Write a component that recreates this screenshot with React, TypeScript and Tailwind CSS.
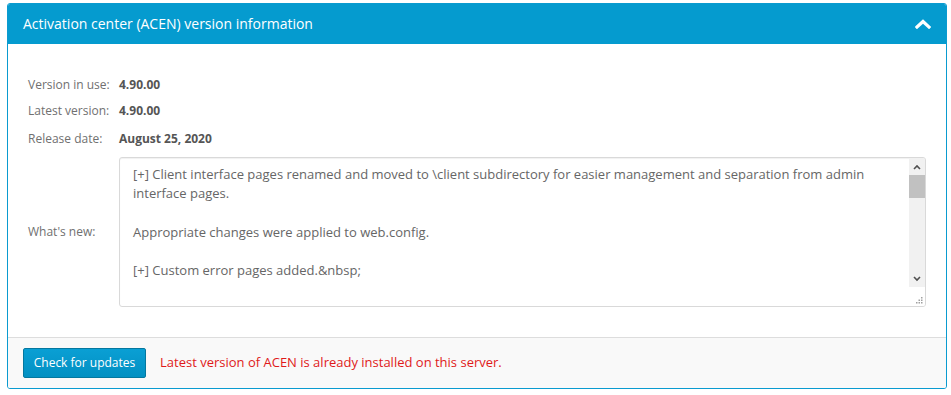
import React from "react";

export default function App() {
  const font = { fontFamily: '"Open Sans", "Liberation Sans", sans-serif' };
  return (
    <div className="w-[951px] h-[395px] bg-white pt-[3px] pl-[7px]" style={font}>
      <div className="w-[940px] h-[386px] border border-[#0a9bd0] rounded-[3px] flex flex-col overflow-hidden">
        {/* header */}
        <div className="h-[41px] -mt-px -mx-px bg-[#059bcf] flex items-center justify-between pl-[16px] pr-[16px] rounded-t-[3px]">
          <span className="text-white text-[14px] leading-none">Activation center (ACEN) version information</span>
          <svg width="16" height="10" viewBox="0 0 16 10">
            <polyline points="2,8 8,2.5 14,8" fill="none" stroke="white" strokeWidth="3.2" strokeLinecap="square" strokeLinejoin="miter" />
          </svg>
        </div>
        {/* body */}
        <div className="flex-1 bg-white pt-[28px] pl-[20px] pr-[20px] text-[12px]">
          <div className="flex items-center h-[26px]">
            <span className="w-[91px] text-[#707070]">Version in use:</span>
            <span className="font-bold text-[#555]">4.90.00</span>
          </div>
          <div className="flex items-center h-[26px]">
            <span className="w-[91px] text-[#707070]">Latest version:</span>
            <span className="font-bold text-[#555]">4.90.00</span>
          </div>
          <div className="flex items-center h-[26px] mt-[2px]">
            <span className="w-[91px] text-[#707070]">Release date:</span>
            <span className="font-bold text-[#555]">August 25, 2020</span>
          </div>
          <div className="flex items-center mt-[5px]">
            <span className="w-[91px] text-[#707070]">What's new:</span>
            <div className="w-[807px] h-[150px] border border-[#d9d9d9] rounded-[3px] flex overflow-hidden shadow-[inset_0_1px_1px_rgba(0,0,0,0.06)]">
              <div className="flex-1 pl-[13px] pt-[7px] pr-[10px] text-[13px] leading-[19.2px] text-[#666]">
                <p>[+] Client interface pages renamed and moved to \client subdirectory for easier management and separation from admin interface pages.</p>
                <p>&nbsp;</p>
                <p>Appropriate changes were applied to web.config.</p>
                <p>&nbsp;</p>
                <p>[+] Custom error pages added.&amp;nbsp;</p>
              </div>
              <div className="w-[16px] flex flex-col">
                <div className="flex-1 bg-[#f1f1f1] flex flex-col">
                  <div className="h-[17px] flex items-center justify-center">
                    <svg width="8" height="6" viewBox="0 0 8 6"><polyline points="1,5 4,2 7,5" fill="none" stroke="#505050" strokeWidth="1.6" /></svg>
                  </div>
                  <div className="h-[23px] bg-[#c1c1c1]" />
                  <div className="flex-1" />
                  <div className="h-[17px] flex items-center justify-center">
                    <svg width="8" height="6" viewBox="0 0 8 6"><polyline points="1,1 4,4 7,1" fill="none" stroke="#505050" strokeWidth="1.6" /></svg>
                  </div>
                </div>
                <div className="h-[19px] bg-white flex items-end justify-end pr-[2px] pb-[2px]">
                  <svg width="7" height="7" viewBox="0 0 7 7" fill="#a0a0a0">
                    <rect x="5" y="0" width="1.5" height="1.5" />
                    <rect x="2.5" y="2.5" width="1.5" height="1.5" />
                    <rect x="5" y="2.5" width="1.5" height="1.5" />
                    <rect x="0" y="5" width="1.5" height="1.5" />
                    <rect x="2.5" y="5" width="1.5" height="1.5" />
                    <rect x="5" y="5" width="1.5" height="1.5" />
                  </svg>
                </div>
              </div>
            </div>
          </div>
        </div>
        {/* footer */}
        <div className="h-[51px] border-t border-[#dddddd] bg-[#f9f9f9] flex items-center pl-[15px] gap-[14px]">
          <button className="h-[30px] w-[123px] rounded-[2px] border border-[#04789f] bg-gradient-to-b from-[#0a9fd4] to-[#0390c2] text-white text-[12px]">
            Check for updates
          </button>
          <span className="text-[13px] text-[#e01a1a]">Latest version of ACEN is already installed on this server.</span>
        </div>
      </div>
    </div>
  );
}
